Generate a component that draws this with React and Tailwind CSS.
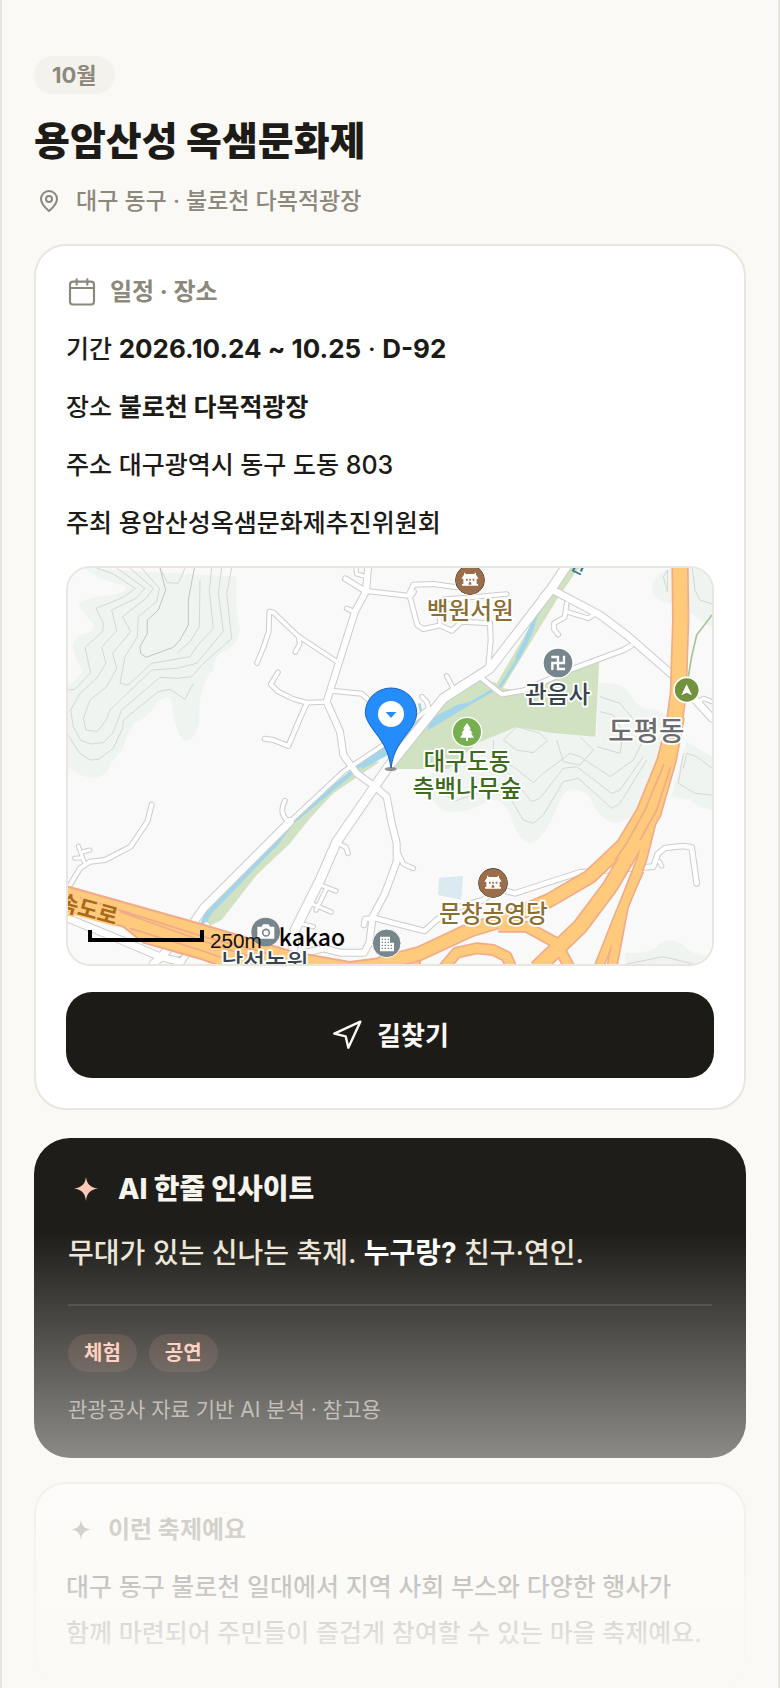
import React from 'react';

const SCHEDULE = [
    { label: '장소', value: '불로천 다목적광장', bold: true },
    { label: '주소', value: '대구광역시 동구 도동 803' },
    { label: '주최', value: '용암산성옥샘문화제추진위원회' },
];

const TAGS = ['체험', '공연'];

function PinIcon() {
    return (
        <svg viewBox="0 0 24 24" className="w-6 h-6" fill="none" stroke="currentColor" strokeWidth="2" strokeLinejoin="round">
            <path d="M12 22c-1-1-8-6.300-8-12a8 8 0 0 1 16 0c0 5.700-7 11-8 12z" />
            <circle cx="12" cy="10" r="3" />
        </svg>
    );
}

function CalendarIcon() {
    return (
        <svg viewBox="0 0 24 24" className="w-8 h-8" fill="none" stroke="currentColor" strokeWidth="1.6" strokeLinecap="round">
            <rect x="3" y="4.200" width="18" height="17.200" rx="2.200" />
            <path d="M3 9h18M8 2.500v4M16 2.500v4" />
        </svg>
    );
}

function NavigationIcon() {
    return (
        <svg viewBox="0 0 24 24" className="w-8 h-8" fill="none" stroke="currentColor" strokeWidth="1.8" strokeLinejoin="round">
            <path d="M2.500 11 22 2l-9 19.500-2-8.500z" />
        </svg>
    );
}

function SparkleIcon({ className }) {
    return (
        <svg viewBox="0 0 24 24" className={className} fill="currentColor">
            <path d="M12 0c.9 6.600 3.600 10.400 12 11.500-8.400 1.200-11.100 5-12 12.500-.9-7.500-3.600-11.300-12-12.500C8.400 10.400 11.100 6.600 12 0z" />
        </svg>
    );
}

/* 지도 데이터: [경로, 폭] */
const ROADS = [
    ['M591 309 612 258 626 215 628 155 640 157 714 228 828 303', 13],
    ['M716 230 719 252 706 276', 13],
    ['M856 56 917 94', 16],
    ['M888 26 890 42 912 48', 12],
    ['M860 145 886 157', 13],
    ['M925 94 1045 107 1060 74 1120 72 1190 82', 14],
    ['M1062 95 1050 112 1072 195 1090 207 1140 196 1175 212 1205 185 1290 190', 14],
    ['M1140 196 1138 160 1150 118 1230 112 1340 102', 13],
    ['M1290 190 1292 240 1285 320', 14],
    ['M654 337 632 373 655 395 700 417 740 428 796 426', 13],
    ['M740 430 720 475 685 558 640 540 614 536', 14],
    ['M815 392 905 401 926 420', 14],
    ['M1160 348 1180 385', 13],
    ['M1086 410 1100 425 1108 450', 13],
    ['M1520 130 1514 172 1482 190 1482 208 1495 224', 13],
    ['M1520 155 1585 175 1600 165', 13],
    ['M1262 352 1325 403 1390 392 1535 328 1690 270 1712 258', 15],
    ['M1910 430 1930 415 1956 425', 12],
    ['M1100 450 970 555 850 635 800 682 690 785', 13],
    ['M675 722Q655 760 685 785', 13],
    ['M275 734 262 785 212 860 135 900 90 905 60 925 24 985', 14],
    ['M72 905 55 858M90 870 66 876M44 895 66 893', 11],
    ['M835 850 858 862 864 880', 13],
    ['M782 975 828 993M752 1030 814 1056M800 985 768 1050M720 1090 760 1100', 12],
    ['M1015 880 1030 912 1060 925', 13],
    ['M912 1095 915 1077 945 1075 1093 1113 1130 1080 1200 1040 1270 1020 1310 985 1365 1000 1560 937 1780 920 1793 882 1815 864 1870 858 1895 862 1910 970', 16],
    ['M1798 905 1805 918', 12],
    ['M1450 110 1475 88 1620 165 1700 225 1845 352 1956 475', 22],
    ['M24 1075 170 1135 300 1190 360 1205', 22],
    ['M440 1095 360 1212', 18],
    ['M924 24 918 94 885 155 800 425 840 515 850 585 890 640 945 680 980 710 995 790 1010 850 1010 905 975 1000 938 1070 928 1150 912 1178 840 1178 790 1165 740 1178', 20],
    ['M690 785 430 1045 385 1110 280 1212', 24],
    ['M1525 10 1475 85 1290 325 1150 415 985 620 830 845 780 960 705 1110 695 1200', 28],
];

const HIGHWAYS = [
    ['M1315 1100 1400 1100 1490 1150 1530 1225', 30],
    ['M1150 1225 1190 1178 1250 1165 1300 1170 1340 1190 1355 1225', 30],
    ['M1738 930 1680 1060 1615 1225', 26],
    ['M1838 540 1795 700 1745 900 1690 1040 1655 1225', 28],
    ['M1846 470 1813 600 1750 755 1690 855 1590 950 1470 1020 1330 1080 1230 1110 1080 1180 960 1212', 40],
    ['M1850 470 1826 600 1780 760 1650 980 1560 1100 1430 1225', 44],
    ['M1860 10 1862 180 1855 400 1843 490 1816 600 1770 735', 46],
];

const CONTOURS = [
    'M110 24 160 42 226 85 190 112 108 145 130 190 128 215 75 262 92 338 45 388 24 390',
    'M170 24 255 85 228 115 155 150 170 212 125 262 138 310 110 355 60 400 32 450 40 500 62 540 90 552 130 548 158 520 170 490 185 450 300 352 350 355 395 350 430 310 515 236 500 100 515 24',
    'M210 24 280 85 258 115 188 170 212 215 158 280 170 325 140 380 90 420 70 475 78 510 112 515 138 480 150 450 275 330 350 325 410 310 490 214 475 100 485 24',
    'M245 24 298 85 290 125 235 170 232 230 195 290 180 370 205 375 275 310 390 290 410 260 460 205 448 95 455 24',
    'M300 24 322 68 355 70 375 24',
    'M420 60 418 200 390 245 350 280',
    'M24 525 60 580 90 600 115 598 160 565 188 505 190 480 295 395 330 388 375 418 400 370',
    'M1330 540 1370 500 1440 520 1462 542 1420 578 1370 570z',
    'M1300 540 1300 590 1360 620 1420 668 1450 640 1530 580 1560 590 1650 650 1720 600 1750 540',
    'M1290 600 1345 640 1415 725 1440 715 1510 625 1550 620 1655 700 1680 690 1750 590',
    'M1330 680 1390 780 1420 790 1450 765 1510 665 1555 655 1655 745 1680 730 1760 600',
    'M1490 540 1510 605 1560 615 1600 570 1560 530',
    'M1620 410 1680 430 1730 490 1790 520',
    'M1620 455 1660 465 1690 520 1680 580 1610 560',
    'M1870 580 1855 670 1905 700 1956 705',
    'M1870 625 1880 580 1910 590 1956 625',
    'M1810 50 1822 30 1822 95z',
    'M1897 24 1905 90 1920 120 1956 132',
    'M1130 680 1180 725 1280 690',
    'M1700 1212 1810 1190 1900 1212',
];

function HouseGlyph({ x, y }) {
    return (
        <g transform={`translate(${x} ${y})`}>
            <circle r="43" fill="#9a6d4b" />
            <path d="M-18-22h4v4h28v-4h4v6l8 12h-6v16h4v5h-48v-5h4V-4h-6l8-12z" fill="#fff" />
            <path d="M-12-4h5v6h-5zM-2-4h5v6h-5zM8-4h5v6H8zM-4 14V10a4 4 0 0 1 8 0v4z" fill="#9a6d4b" />
        </g>
    );
}

function MapLabel({ x, y, fill, size = 71, children }) {
    return (
        <text
            x={x}
            y={y}
            fill={fill}
            fontSize={size}
            fontWeight="500"
            textAnchor="middle"
            stroke="#fff"
            strokeWidth="11"
            strokeLinejoin="round"
            paintOrder="stroke"
        >
            {children}
        </text>
    );
}

function FestivalMap() {
    return (
        <svg
            viewBox="24 24 1932 1188"
            preserveAspectRatio="xMidYMid slice"
            className="block w-full h-[396px] bg-[#f9f9f9]"
            role="img"
            aria-label="불로천 다목적광장 지도"
        >
            {/* 산지 */}
            <g fill="#eff4f1">
                <path d="M70 24Q120 60 195 78 210 95 150 105 60 115 55 135 70 160 100 190 110 215 60 225 35 240 40 270 50 310 70 330 50 360 24 375V620Q60 655 110 654 150 640 150 610 195 570 195 540 215 510 220 490 260 480 290 430 320 400 335 420 340 500 370 542 400 550 418 490 412 380 460 330 460 300 480 280 530 265 540 210 525 150 530 50 545 24z" />
                <path d="M1615 370Q1680 360 1710 400 1730 450 1790 450L1850 480 1810 620 1740 735Q1690 810 1640 780 1600 750 1590 710 1530 660 1500 720 1450 850 1410 848 1370 840 1350 760 1320 710 1290 720 1210 770 1150 750 1100 720 1100 650L1240 550 1370 500 1610 530z" />
                <path d="M1880 545 1956 590V750Q1920 745 1890 720L1833 710z" />
                <path d="M1830 24Q1770 50 1777 90 1780 130 1850 130L1956 205V24z" />
                <path d="M1695 1178Q1780 1185 1800 1150 1830 1130 1870 1155 1890 1185 1956 1188V1212H1695z" />
            </g>
            <g fill="none" stroke="#d2d8d1" strokeWidth="3">
                {CONTOURS.map((d) => (
                    <path key={d} d={d} />
                ))}
                <path d="M300 24 317 90 295 150 262 180 262 220 240 260 242 280 258 292 340 262 360 240 385 195 385 120 403 24" stroke="#bfc6bc" />
            </g>

            {/* 공원과 하천 */}
            <g fill="#d1e2c2">
                <path d="M1515 24H1555L1490 120 1328 385 1390 392 1535 328 1618 300 1606 530 1470 518 1370 500 1250 550 1165 627H1000L1130 440 1265 355 1310 370 1450 130z" />
                <path d="M900 605H960L820 700 750 775 690 850 590 945 485 1080 440 1102 425 1095 450 1060 590 920 690 790 850 660z" />
                <path d="M330 1212 440 1120 400 1170 355 1212z" />
            </g>
            <g fill="none" stroke="#a2d5ea">
                <path d="M1510 55 1430 165 1410 225 1365 310 1320 380" strokeWidth="8" />
                <path d="M1420 190 1395 250 1372 295" strokeWidth="14" />
                <path d="M1100 475 975 575 900 616" strokeWidth="26" />
                <path d="M900 614 862 648 790 708 695 788 640 862" strokeWidth="13" />
                <path d="M655 840 445 1058 426 1100" strokeWidth="18" />
                <path d="M1078 430 1086 470M360 1190 335 1212" strokeWidth="8" />
            </g>
            <path d="M1105 480 1190 435 1230 425 1310 378 1322 382 1230 435 1105 510z" fill="#a2d5ea" />
            <path d="m1137 953 72-5-5 71-70-14z" fill="#dbeaf1" />

            {/* 도로 */}
            <g fill="none" strokeLinecap="round" strokeLinejoin="round">
                {ROADS.map(([d, w]) => (
                    <path key={d} d={d} stroke="#cccccc" strokeWidth={w + 4} />
                ))}
                {ROADS.map(([d, w]) => (
                    <path key={d} d={d} stroke="#ffffff" strokeWidth={w - 2} />
                ))}
            </g>
            <path d="M1956 165 1910 225 1895 290 1885 350" fill="none" stroke="#a6c492" strokeWidth="5" />

            {/* 고속도로 */}
            <path
                d="M14 977 420 1091 700 1176 870 1206 1080 1178V1240H540L420 1196 250 1148 190 1100 14 1050z"
                fill="#ffca7c"
                stroke="#f1ab88"
                strokeWidth="6"
            />
            <path d="M60 1012 430 1130 640 1185M180 1055 420 1140 600 1200M210 1105 420 1170 540 1212" fill="none" stroke="#f1ab88" strokeWidth="5" />
            <g fill="none" strokeLinejoin="round">
                {HIGHWAYS.map(([d, w]) => (
                    <path key={d} d={d} stroke="#f1ab88" strokeWidth={w + 6} />
                ))}
                {HIGHWAYS.map(([d, w]) => (
                    <path key={d} d={d} stroke="#ffca7c" strokeWidth={w - 4} />
                ))}
                <path d="M1812 612 1755 750 1700 850 1665 900M1832 620 1790 750 1740 840" stroke="#f1ab88" strokeWidth="5" />
            </g>

            {/* 장소 아이콘 */}
            <g stroke="#fff" strokeWidth="5" paintOrder="stroke">
                <circle cx="1230" cy="60" r="44" />
                <circle cx="1299" cy="969" r="44" />
            </g>
            <HouseGlyph x={1230} y={60} />
            <HouseGlyph x={1299} y={969} />
            <circle cx="1494" cy="309" r="45" fill="#77868c" stroke="#fff" strokeWidth="4" />
            <path d="M1474 291h20v36h21M1477 330v-21h35v-22" fill="none" stroke="#fff" strokeWidth="7" />
            <circle cx="1221" cy="516" r="44" fill="#76ae50" stroke="#fff" strokeWidth="4" />
            <path d="m1221 489 12 17h-5l10 14h-5l9 13h-18v10h-6v-10h-18l9-13h-5l10-14h-5z" fill="#fff" />
            <circle cx="1880" cy="390" r="38" fill="#71933f" stroke="#fff" strokeWidth="5" />
            <path d="m1880 373 16 33-16-8-16 8z" fill="#fff" />
            <circle cx="617" cy="1116" r="43" fill="#77868c" />
            <path d="M592 1100h13l4-7h17l4 7h13v36h-51z" fill="#fff" />
            <circle cx="618" cy="1118" r="10" fill="none" stroke="#77868c" strokeWidth="5" />
            <circle cx="980" cy="1150" r="43" fill="#77868c" stroke="#fff" strokeWidth="3" />
            <path d="M960 1130h30v18h12v26h-42z" fill="#fff" />
            <path d="M965 1138h22M965 1147h22M965 1156h34M965 1165h34" stroke="#77868c" strokeWidth="4" strokeDasharray="4 5" />

            {/* 지명 */}
            <g fontFamily="'Noto Sans CJK KR', sans-serif">
                <MapLabel x={1231} y={178} fill="#8c6f30">백원서원</MapLabel>
                <MapLabel x={1493} y={429} fill="#37444d">관음사</MapLabel>
                <MapLabel x={1759} y={543} fill="#6c6c6c" size={83}>도평동</MapLabel>
                <MapLabel x={1221} y={630} fill="#3d6b1f">대구도동</MapLabel>
                <MapLabel x={1221} y={712} fill="#3d6b1f">측백나무숲</MapLabel>
                <MapLabel x={1300} y={1086} fill="#8c6f30">문창공영당</MapLabel>
                <MapLabel x={615} y={1232} fill="#37444d">남선농원</MapLabel>
                <text x="-10" y="1047" fontSize="66" fontWeight="700" fill="#a9681c" stroke="#ffca7c" strokeWidth="10" paintOrder="stroke" transform="rotate(15 -10 1047)">속도로</text>
                <text x="1528" y="26" fontSize="46" fontWeight="700" fill="#2f7a92" transform="rotate(25 1528 26)">천</text>
                <text x="656" y="1157" fontSize="69" fontWeight="500" fill="#000">kakao</text>
            </g>
            <text x="450" y="1164" fontSize="62" fill="#111" fontFamily="'Liberation Sans', sans-serif">250m</text>
            <path d="M90 1110v30h336v-30" fill="none" stroke="#000" strokeWidth="12" />

            {/* 행사장 핀 */}
            <ellipse cx="992" cy="627" rx="18" ry="6" fill="#777" opacity="0.8" />
            <path
                d="M993 624C985 565 962 540 940 510 924 488 916 472 916 458a77 74 0 0 1 154 0c0 18-8 34-24 56-22 30-45 54-53 110z"
                fill="#258cfb"
                stroke="#1a5fc4"
                strokeWidth="3"
            />
            <circle cx="993" cy="462" r="39" fill="#fff" />
            <path d="M977 456h32l-16 18z" fill="#258cfb" />
        </svg>
    );
}

export default function App() {
    return (
        <div className="relative min-h-screen overflow-hidden border-x-2 border-[#e8e6df] bg-[#faf9f5] px-8 pt-14 text-[#1d1b17] font-['Inter','Noto_Sans_CJK_KR',sans-serif]">
            <header>
                <div className="flex">
                    <span className="flex h-[38px] items-center rounded-full bg-[#f3f2ed] px-[18px] text-[22px] font-bold text-[#8d887c]">10월</span>
                </div>
                <h1 className="mt-5 text-[39px] leading-[54px] font-extrabold">용암산성 옥샘문화제</h1>
                <p className="mt-4 flex items-center gap-3 text-[23px] leading-[34px] font-medium text-[#8d887c]">
                    <span className="flex w-[30px] justify-center"><PinIcon /></span>
                    대구 동구 · 불로천 다목적광장
                </p>
            </header>

            <main>
                {/* 일정 · 장소 */}
                <section className="mt-[26px] rounded-[32px] border-2 border-[#e8e6df] bg-white p-[30px]">
                    <h2 className="flex h-8 items-center gap-3 text-[24px] font-bold text-[#8d887c]">
                        <CalendarIcon />
                        일정 · 장소
                    </h2>
                    <div className="mt-5 flex flex-col gap-4 text-[25px] leading-[42px] font-medium">
                        <p>기간 <strong className="text-[26px] font-bold">2026.10.24 ~ 10.25</strong> · <strong className="text-[26px] font-bold">D-92</strong></p>
                        {SCHEDULE.map((row) => (
                            <p key={row.label}>
                                {row.label} {row.bold ? <strong className="font-bold">{row.value}</strong> : row.value}
                            </p>
                        ))}
                    </div>
                    <div className="mt-[22px] overflow-hidden rounded-[24px] border-2 border-[#e8e6df]">
                        <FestivalMap />
                    </div>
                    <button type="button" className="mt-[26px] flex h-[86px] w-full items-center justify-center gap-[14px] rounded-[26px] bg-[#1d1b17] text-[26px] font-bold text-[#faf9f5]">
                        <NavigationIcon />
                        길찾기
                    </button>
                </section>

                {/* AI 인사이트 */}
                <section className="mt-7 rounded-[36px] bg-[#1f1d19] p-[34px]">
                    <h2 className="flex items-center gap-[14px] text-[28px] leading-[34px] font-extrabold text-[#f7f4ee]">
                        <span className="flex w-9 justify-center text-[#ffc9b8]"><SparkleIcon className="w-6 h-6" /></span>
                        AI 한줄 인사이트
                    </h2>
                    <p className="mt-6 text-[28px] leading-[46px] font-medium text-[#ebe6d8]">
                        무대가 있는 신나는 축제. <strong className="font-bold text-white">누구랑?</strong> 친구·연인.
                    </p>
                    <div className="mt-7 border-t-2 border-white/10 pt-7">
                        <ul className="flex gap-3">
                            {TAGS.map((tag) => (
                                <li key={tag} className="flex h-[38px] items-center rounded-full bg-[#ff9a80]/12 px-4 text-[20px] font-bold text-[#ffc4b2]">
                                    {tag}
                                </li>
                            ))}
                        </ul>
                        <p className="mt-6 text-[21px] leading-[28px] text-[#a09b90]">관광공사 자료 기반 AI 분석 · 참고용</p>
                    </div>
                </section>

                {/* 축제 소개 */}
                <section className="mt-6 rounded-[32px] border-2 border-[#e8e6df] bg-white p-[30px]">
                    <h2 className="flex h-8 items-center gap-3 text-[24px] font-bold text-[#8d887c]">
                        <span className="flex w-[30px] justify-center"><SparkleIcon className="w-5 h-5" /></span>
                        이런 축제예요
                    </h2>
                    <p className="mt-[18px] text-[25px] leading-[46px] font-medium break-keep text-[#1d1b17]">
                        대구 동구 불로천 일대에서 지역 사회 부스와 다양한 행사가 함께 마련되어 주민들이 즐겁게 참여할 수 있는 마을 축제예요.
                    </p>
                </section>
            </main>

            {/* 하단 페이드 */}
            <div className="pointer-events-none absolute inset-x-0 bottom-0 h-[456px] bg-gradient-to-b from-[#faf9f5]/0 to-[#faf9f5]"></div>
        </div>
    );
}
